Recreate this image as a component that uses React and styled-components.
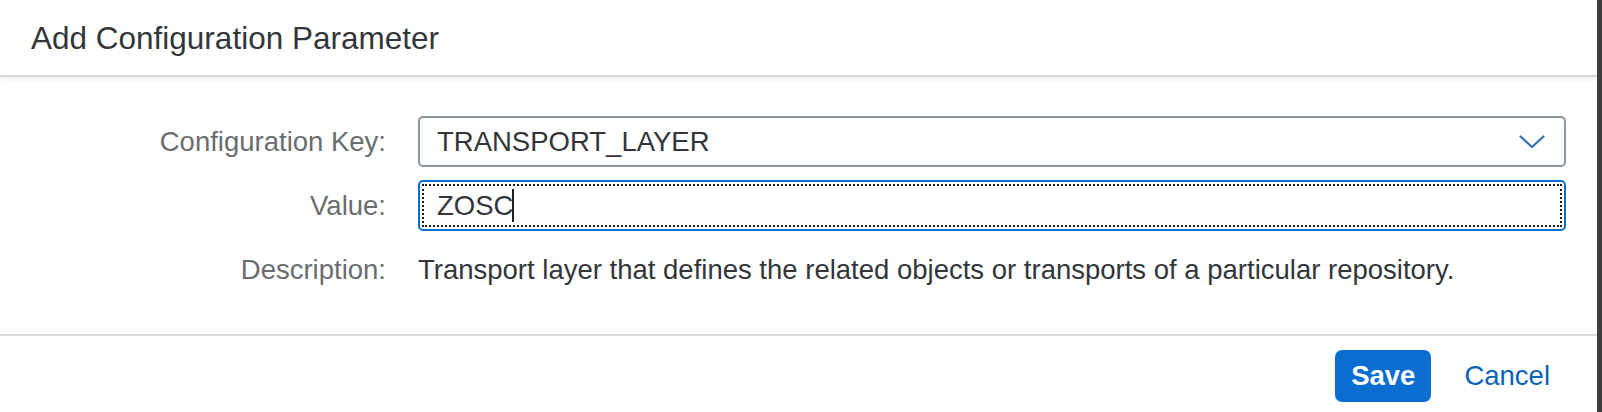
import React from "react";
import styled, { createGlobalStyle } from "styled-components";

const Global = createGlobalStyle`
  html, body { margin: 0; padding: 0; }
  body {
    background: #3d3d3d;
    font-family: "Liberation Sans", Arial, sans-serif;
    -webkit-font-smoothing: antialiased;
  }
  *, *::before, *::after { box-sizing: border-box; }
`;

const Dialog = styled.div`
  width: 1597px;
  height: 412px;
  background: #ffffff;
  display: flex;
  flex-direction: column;
  overflow: hidden;
`;

const Header = styled.header`
  height: 77px;
  flex: 0 0 auto;
  display: flex;
  align-items: center;
  padding: 0 31px;
  border-bottom: 2px solid #d9d9d9;
  box-shadow: 0 3px 4px rgba(0, 0, 0, 0.06);
  position: relative;
  z-index: 1;
`;

const Title = styled.h1`
  margin: 0;
  font-size: 31.5px;
  font-weight: 400;
  color: #32363a;
  padding-top: 2px;
`;

const Form = styled.div`
  flex: 0 0 auto;
  display: grid;
  grid-template-columns: 386px 1fr;
  column-gap: 32px;
  row-gap: 13px;
  grid-auto-rows: 51px;
  padding: 39px 31px 39px 0;
`;

const Label = styled.label`
  justify-self: end;
  align-self: center;
  font-size: 27.5px;
  color: #6a6d70;
`;

const Field = styled.div`
  height: 51px;
  border: 2px solid ${(p) => (p.$focused ? "#0a6ed1" : "#8d959d")};
  border-radius: 5px;
  background: #fff;
  display: flex;
  align-items: center;
  position: relative;
  padding: 0 16px 0 17px;
`;

const FocusRing = styled.div`
  position: absolute;
  inset: 2px;
  border: 2px dotted #1a1a1a;
  pointer-events: none;
`;

const FieldText = styled.span`
  flex: 1;
  font-size: 27.5px;
  color: #32363a;
  display: flex;
  align-items: center;
`;

const Caret = styled.span`
  display: inline-block;
  width: 2px;
  height: 33px;
  background: #1f1f1f;
  margin-left: -1px;
`;

const Chevron = styled.svg`
  width: 26px;
  height: 14px;
  flex: 0 0 auto;
  margin-right: 3px;
`;

const Description = styled.div`
  align-self: center;
  font-size: 27.5px;
  color: #32363a;
`;

const Footer = styled.footer`
  border-top: 2px solid #d9d9d9;
  flex: 1 1 auto;
  display: flex;
  justify-content: flex-end;
  align-items: flex-start;
  padding: 14px 47px 0 0;
  gap: 33px;
`;

const Button = styled.button`
  height: 52px;
  border-radius: 7px;
  font-family: inherit;
  font-size: 27.5px;
  cursor: pointer;
  border: none;
  background: ${(p) => (p.$primary ? "#0a6ed1" : "transparent")};
  color: ${(p) => (p.$primary ? "#ffffff" : "#0a62b8")};
  font-weight: ${(p) => (p.$primary ? 700 : 400)};
  padding: ${(p) => (p.$primary ? "0 16px" : "0")};
  min-width: ${(p) => (p.$primary ? "96px" : "0")};
`;

export default function App() {
  return (
    <>
      <Global />
      <Dialog>
        <Header>
          <Title>Add Configuration Parameter</Title>
        </Header>
        <Form>
          <Label>Configuration Key:</Label>
          <Field>
            <FieldText>TRANSPORT_LAYER</FieldText>
            <Chevron viewBox="0 0 26 14">
              <polyline
                points="1.5,1.5 13,12 24.5,1.5"
                fill="none"
                stroke="#2f6fb3"
                strokeWidth="2.2"
                strokeLinecap="round"
                strokeLinejoin="round"
              />
            </Chevron>
          </Field>
          <Label>Value:</Label>
          <Field $focused>
            <FocusRing />
            <FieldText>
              ZOSC
              <Caret />
            </FieldText>
          </Field>
          <Label>Description:</Label>
          <Description>
            Transport layer that defines the related objects or transports of a particular repository.
          </Description>
        </Form>
        <Footer>
          <Button $primary>Save</Button>
          <Button>Cancel</Button>
        </Footer>
      </Dialog>
    </>
  );
}
